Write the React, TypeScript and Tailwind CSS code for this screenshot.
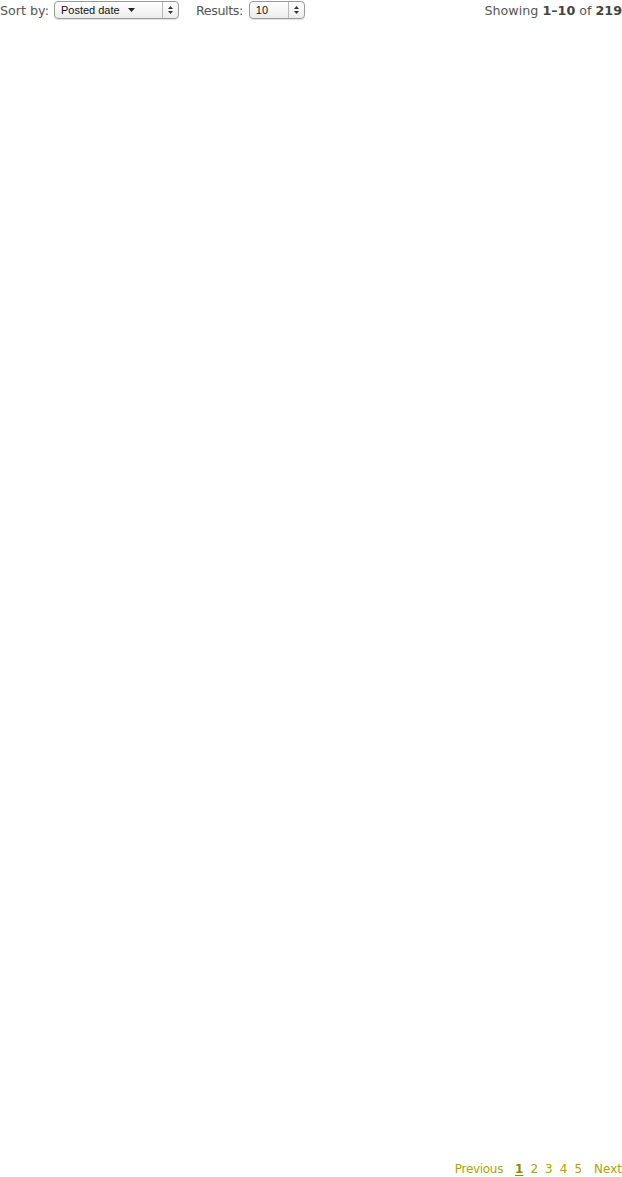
import React from 'react'

const font = { fontFamily: '"DejaVu Sans", "Liberation Sans", sans-serif' }

function Stepper() {
  return (
    <span className="flex h-full w-[16px] flex-col items-center justify-center gap-[2px] border-l border-[#b8b8b8]">
      <svg width="5" height="3" viewBox="0 0 5 3"><path d="M0 3 L2.5 0 L5 3 Z" fill="#333" /></svg>
      <svg width="5" height="3" viewBox="0 0 5 3"><path d="M0 0 L2.5 3 L5 0 Z" fill="#333" /></svg>
    </span>
  )
}

function FakeSelect({ label, width, caret }: { label: string; width: string; caret?: boolean }) {
  return (
    <span
      className={`inline-flex h-[18px] items-center overflow-hidden rounded-[4px] border border-[#9a9a9a] bg-gradient-to-b from-white to-[#ececec] shadow-[0_1px_1px_rgba(0,0,0,0.12)] ${width}`}
    >
      <span className="flex flex-1 items-center gap-[8px] pl-[6px] text-[11px] text-[#111]" style={{ fontFamily: '"Liberation Sans", Arial, sans-serif' }}>
        {label}
        {caret && (
          <svg width="7" height="4" viewBox="0 0 7 4"><path d="M0 0 L7 0 L3.5 4 Z" fill="#222" /></svg>
        )}
      </span>
      <Stepper />
    </span>
  )
}

const pages = ['1', '2', '3', '4', '5']

export default function App() {
  return (
    <div className="flex h-[1177px] w-[622px] flex-col bg-white text-[12.7px]" style={font}>
      <div className="flex h-[21px] items-center justify-between">
        <div className="flex items-center text-[#555]">
          <span className="mr-[5px]">Sort by:</span>
          <FakeSelect label="Posted date" width="w-[125px]" caret />
          <span className="ml-[17px] mr-[6px] tracking-[-0.4px]">Results:</span>
          <FakeSelect label="10" width="w-[56px]" />
        </div>
        <div className="text-[#555]">
          Showing <b className="text-[#444]">1–10</b> of <b className="text-[#444]">219</b>
        </div>
      </div>

      <div className="flex-1" />

      <div className="flex h-[17px] items-start justify-end gap-[7px] text-[12px] text-[#aaa500]">
        <span className="mr-[5px] tracking-[-0.3px]">Previous</span>
        {pages.map((p) => (
          <span key={p} className={p === '1' ? 'font-bold text-[#8f8a00] underline underline-offset-2' : ''}>
            {p}
          </span>
        ))}
        <span className="ml-[5px]">Next</span>
      </div>
    </div>
  )
}
